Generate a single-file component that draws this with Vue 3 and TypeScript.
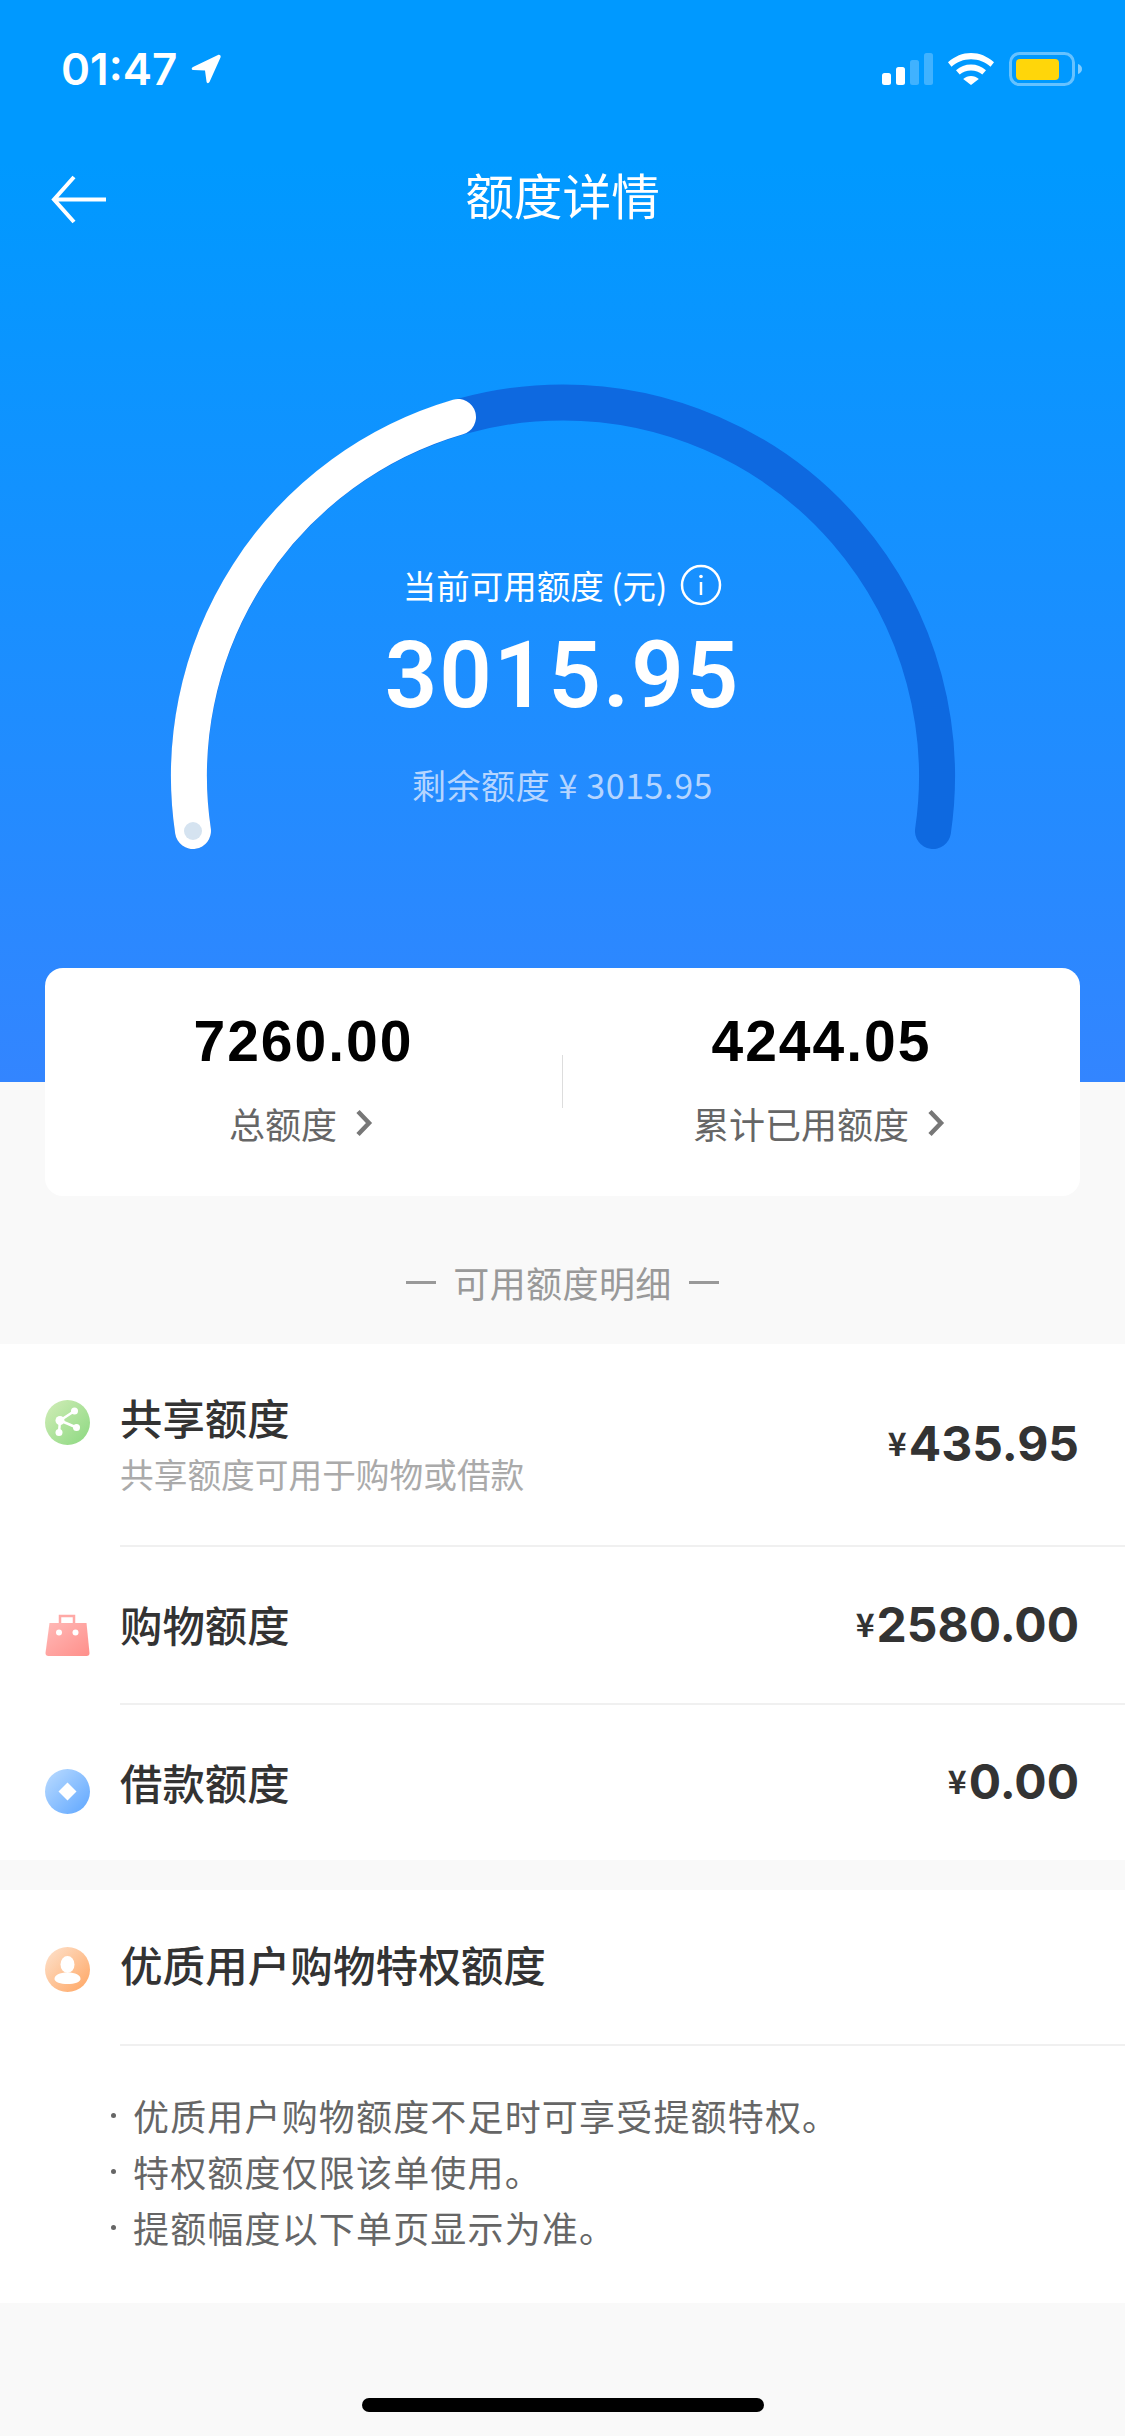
<script setup lang="ts">
interface Row { key: string; title: string; sub?: string; amount: string }
const rows: Row[] = [
  { key: 'share', title: '共享额度', sub: '共享额度可用于购物或借款', amount: '435.95' },
  { key: 'shop', title: '购物额度', amount: '2580.00' },
  { key: 'loan', title: '借款额度', amount: '0.00' },
]
const notes: string[] = ['优质用户购物额度不足时可享受提额特权。', '特权额度仅限该单使用。', '提额幅度以下单页显示为准。']
</script>

<template>
  <div class="page">
    <section class="hero">
      <div class="status">
        <div class="time-wrap">
          <span class="time">01:47</span>
          <svg class="loc" width="31" height="31" viewBox="0 0 31 31"><path d="M27 1 2 13c-2 1-1.500 3 .5 3l11.500.5 1.500 11c.3 2 2 2.200 3 .5L29.500 3.500C30.300 1.800 28.700.2 27 1z" fill="#fff"/></svg>
        </div>
        <svg class="sys" width="200" height="34" viewBox="0 0 200 34">
          <rect x="0" y="21" width="9" height="12" rx="2.500" fill="#fff"/>
          <rect x="14" y="15" width="9" height="18" rx="2.500" fill="#fff"/>
          <rect x="28" y="8" width="9" height="25" rx="2.500" fill="#fff" opacity=".25"/>
          <rect x="42" y="1" width="9" height="32" rx="2.500" fill="#fff" opacity=".25"/>
          <path d="M89 1c-8.500 0-16 3.200-23 9.200l3.500 4.500C75 10 81.500 7.300 89 7.300s14 2.700 19.500 7.400l3.500-4.500C105 4.200 97.500 1 89 1z" fill="#fff"/>
          <path d="M89 12.500c-5.800 0-10.500 2-15 5.700l3.700 4.400c3.200-2.600 7-4 11.300-4s8.100 1.400 11.300 4l3.700-4.400c-4.500-3.700-9.200-5.700-15-5.700z" fill="#fff"/>
          <path d="M89 24c-3 0-5.500 1-7.800 2.900L89 33l7.800-6.100C94.500 25 92 24 89 24z" fill="#fff"/>
          <rect x="128.500" y="1.500" width="63" height="31" rx="9" fill="none" stroke="#fff" stroke-opacity=".4" stroke-width="3"/>
          <rect x="134" y="7" width="43" height="21" rx="4" fill="#ffd60a"/>
          <path d="M196 12c2.500.8 4 2.600 4 5s-1.500 4.200-4 5z" fill="#fff" fill-opacity=".5"/>
        </svg>
      </div>
      <nav class="nav">
        <svg class="back" width="58" height="50" viewBox="0 0 58 50"><path d="M24 2 4 24.500 24 47M4 24.500h52" fill="none" stroke="#fff" stroke-width="4"/></svg>
        <h1 class="nav-title">额度详情</h1>
      </nav>
      <div class="gauge">
        <svg class="gauge-svg" width="1125" height="500" viewBox="0 0 1125 500">
          <path d="M193 481A374 374 0 1 1 933 481" fill="none" stroke="#0e69e0" stroke-width="36" stroke-linecap="round"/>
          <path d="M193 481A374 374 0 0 1 458 67" fill="none" stroke="#fff" stroke-width="36" stroke-linecap="round"/>
          <circle cx="193" cy="481" r="9" fill="#d5e3f0"/>
        </svg>
        <div class="g-label">
          <span>当前可用额度 (元)</span>
          <svg width="42" height="42" viewBox="0 0 42 42"><circle cx="21" cy="21" r="19" fill="none" stroke="#fff" stroke-width="2.500"/><circle cx="21" cy="12.500" r="1.800" fill="#fff"/><path d="M21 18v13" stroke="#fff" stroke-width="2.500"/></svg>
        </div>
        <div class="g-num">3015.95</div>
        <div class="g-sub">剩余额度 ¥ 3015.95</div>
      </div>
    </section>

    <section class="card">
      <div class="stat">
        <div class="stat-num">7260.00</div>
        <div class="stat-label">总额度
          <svg width="18" height="28" viewBox="0 0 18 28"><path d="M3 2.500 14 14 3 25.500" fill="none" stroke="#777" stroke-width="4.500"/></svg>
        </div>
      </div>
      <div class="stat-line"></div>
      <div class="stat">
        <div class="stat-num">4244.05</div>
        <div class="stat-label">累计已用额度
          <svg width="18" height="28" viewBox="0 0 18 28"><path d="M3 2.500 14 14 3 25.500" fill="none" stroke="#777" stroke-width="4.500"/></svg>
        </div>
      </div>
    </section>

    <div class="sec-head"><i></i><span>可用额度明细</span><i></i></div>

    <section class="list">
      <div v-for="r in rows" :key="r.key" class="row" :class="'row-' + r.key">
        <svg v-if="r.key === 'share'" class="ico" width="45" height="45" viewBox="0 0 45 45">
          <defs><linearGradient id="gs" x1="0" y1="0" x2="1" y2="1"><stop offset="0" stop-color="#d2edb8"/><stop offset="1" stop-color="#8bd880"/></linearGradient></defs>
          <circle cx="22.500" cy="22.500" r="22.500" fill="url(#gs)"/>
          <path d="M29.500 11 15 20.500l16.500 7M15 20.500l-1 12" fill="none" stroke="#fff" stroke-width="2.500"/>
          <circle cx="29.500" cy="11" r="3.500" fill="#fff"/><circle cx="15" cy="20.500" r="4.500" fill="#fff"/><circle cx="31.500" cy="27.500" r="3.500" fill="#fff"/><circle cx="14" cy="32.500" r="3.500" fill="#fff"/>
        </svg>
        <svg v-else-if="r.key === 'shop'" class="ico" width="45" height="45" viewBox="0 0 45 45">
          <defs><linearGradient id="gb" x1="0" y1="0" x2="1" y2="1"><stop offset="0" stop-color="#ffb9b7"/><stop offset="1" stop-color="#ff8f8a"/></linearGradient></defs>
          <path d="M15 10V3h14v7" fill="none" stroke="#ffa9a6" stroke-width="2.500"/>
          <path d="M4 9h37l3 30c.1 2-1 3-3 3H3c-2 0-3-1-3-3z" transform="translate(.5 1)" fill="url(#gb)"/>
          <circle cx="14" cy="19.500" r="3" fill="#fff"/><circle cx="30.500" cy="19.500" r="3" fill="#fff"/>
        </svg>
        <svg v-else class="ico" width="45" height="45" viewBox="0 0 45 45">
          <defs><linearGradient id="gl" x1="0" y1="0" x2="1" y2="1"><stop offset="0" stop-color="#bcdcff"/><stop offset="1" stop-color="#5ea6ff"/></linearGradient></defs>
          <circle cx="22.500" cy="22.500" r="22.500" fill="url(#gl)"/>
          <path d="M22.500 13.500 31.500 22.500 22.500 31.500 13.500 22.500z" fill="#fff"/>
        </svg>
        <div class="row-body">
          <div class="row-text">
            <div class="row-title">{{ r.title }}</div>
            <div v-if="r.sub" class="row-sub">{{ r.sub }}</div>
          </div>
          <div class="amount"><small>¥</small>{{ r.amount }}</div>
        </div>
      </div>
    </section>

    <section class="privilege">
      <div class="pv-head">
        <svg width="45" height="45" viewBox="0 0 45 45">
          <defs><linearGradient id="gu" x1="0" y1="0" x2="1" y2="1"><stop offset="0" stop-color="#fde3cf"/><stop offset="1" stop-color="#ffa561"/></linearGradient></defs>
          <circle cx="22.500" cy="22.500" r="22.500" fill="url(#gu)"/>
          <ellipse cx="22.500" cy="17.500" rx="7" ry="8.500" fill="#fff"/>
          <path d="M9.500 32c0-4 5-6.500 13-6.500s13 2.500 13 6.500c0 3-6 5-13 5s-13-2-13-5z" fill="#fff"/>
        </svg>
        <div class="pv-title"><span>优质用户购物特权额度</span></div>
      </div>
      <ul class="notes">
        <li v-for="n in notes" :key="n">{{ n }}</li>
      </ul>
    </section>

    <div class="home"></div>
  </div>
</template>

<style>
html, body { margin: 0; background: #f9f9f9; }
</style>

<style scoped>
.page {
  width: 1125px;
  height: 2436px;
  overflow: hidden;
  position: relative;
  background: #f9f9f9;
  font-family: "Noto Sans CJK SC", "Noto Sans", sans-serif;
}
.hero {
  height: 1082px;
  background: linear-gradient(180deg, #0099ff 0%, #0099ff 15%, #3385ff 100%);
  color: #fff;
}
.status {
  height: 100px;
  padding: 0 43px 0 61px;
  display: flex;
  justify-content: space-between;
  align-items: flex-start;
}
.time-wrap { display: flex; align-items: center; gap: 14px; margin-top: 42px; height: 54px; }
.time { font: 600 44px/54px Inter, sans-serif; }
.sys { margin-top: 52px; }
.nav { height: 74px; margin-top: 57px; position: relative; display: flex; justify-content: center; align-items: center; }
.back { position: absolute; left: 50px; top: 18px; }
.nav-title { margin: 0; font-size: 48.700px; line-height: 74px; font-weight: 400; }
.gauge { position: relative; height: 851px; display: flex; flex-direction: column; align-items: center; padding-top: 332px; box-sizing: border-box; }
.gauge-svg { position: absolute; left: 0; top: 119px; }
.gauge > div { position: relative; }
.g-label { display: flex; align-items: center; gap: 13px; font-size: 33.500px; line-height: 44px; height: 44px; }
.g-num { font: 600 92px/108px Roboto, sans-serif; letter-spacing: 2px; margin-top: 15px; }
.g-sub { font-size: 34px; line-height: 44px; margin-top: 33px; color: #b5d5ff; letter-spacing: .6px; }
.card {
  margin: -114px 45px 0;
  height: 228px;
  background: #fff;
  border-radius: 18px;
  position: relative;
  display: flex;
}
.stat { flex: 1; display: flex; flex-direction: column; align-items: center; }
.stat-num { font: 700 57px/66px "Liberation Sans", sans-serif; color: #000; margin-top: 40px; letter-spacing: 2px; }
.stat-label { display: flex; align-items: center; gap: 18px; color: #666; font-size: 36px; line-height: 50px; margin-top: 24px; padding-right: 5px; }
.stat-line { width: 1px; height: 53px; background: #ddd; margin-top: 87px; }
.sec-head { height: 148px; display: flex; justify-content: center; align-items: center; gap: 17px; color: #999; font-size: 36px; letter-spacing: .4px; padding-top: 24px; box-sizing: border-box; }
.sec-head i { width: 30px; height: 3px; background: #999; }
.list { background: #fff; }
.row { display: flex; align-items: flex-start; padding-left: 45px; }
.ico { flex: none; }
.row-share { height: 203px; }
.row-share .ico { margin-top: 56px; }
.row-shop { height: 158px; }
.row-shop .ico { margin-top: 66px; }
.row-loan { height: 155px; }
.row-loan .ico { margin-top: 64px; }
.row-body {
  flex: 1;
  height: 100%;
  box-sizing: border-box;
  margin-left: 30px;
  padding-right: 46px;
  border-bottom: 2px solid #f0f0f0;
  display: flex;
  justify-content: space-between;
  align-items: center;
}
.row-loan .row-body { border-bottom: 0; }
.row-text { margin-top: -2px; }
.row-title { font-size: 42.400px; line-height: 56px; font-weight: 500; color: #333; }
.row-sub { font-size: 33.700px; line-height: 50px; margin-top: 4px; color: #aaa; }
.amount { font: 700 48px/60px Inter, sans-serif; color: #333; margin-top: -3px; }
.amount small { font-size: 32px; margin-right: 2px; vertical-align: 5px; font-family: "Noto Sans CJK SC", sans-serif; }
.privilege { background: #fff; margin-top: 30px; height: 413px; padding-left: 45px; }
.pv-head { display: flex; align-items: flex-start; }
.pv-head svg { flex: none; margin-top: 57px; }
.pv-title { flex: 1; margin-left: 30px; height: 156px; box-sizing: border-box; border-bottom: 2px solid #f0f0f0; padding: 46px 0 0; font-size: 42.600px; line-height: 56px; font-weight: 500; color: #333; }
.notes { list-style: none; margin: 41px 0 0; padding: 0 0 0 88px; color: #666; font-size: 36px; line-height: 56px; letter-spacing: 1.170px; }
.notes li { position: relative; }
.notes li::before { content: ""; position: absolute; left: -22px; top: 26px; width: 5px; height: 5px; border-radius: 50%; background: #666; }
.home { position: absolute; left: 362px; bottom: 24px; width: 402px; height: 14px; border-radius: 7px; background: #000; }
</style>
